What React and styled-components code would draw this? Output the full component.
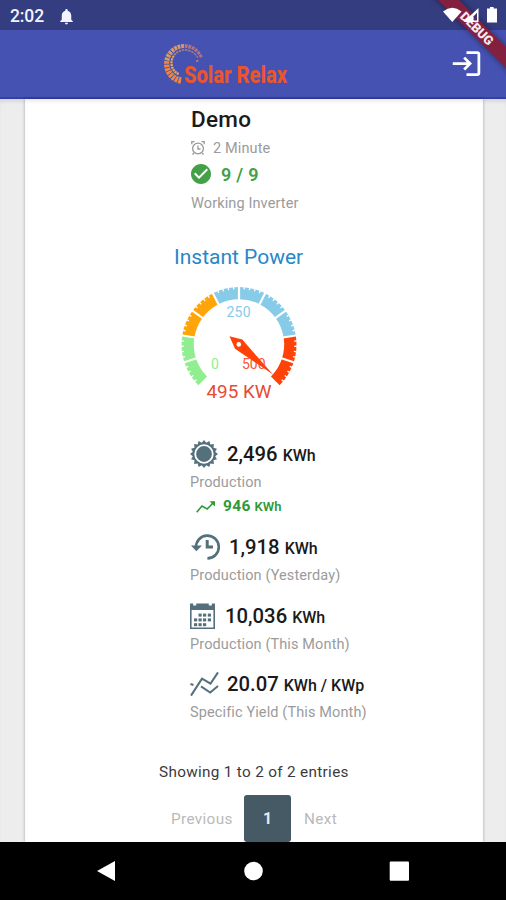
import React from 'react'
import styled, { createGlobalStyle } from 'styled-components'
import { MdLogin, MdNotifications, MdCheckCircle } from 'react-icons/md'

const GlobalStyle = createGlobalStyle`
  * {
    box-sizing: border-box;
  }

  body {
    margin: 0;
    background: #ededed;
    font-family: Roboto, 'Liberation Sans', sans-serif;
  }

  svg {
    display: block;
    flex-shrink: 0;
  }
`

const Screen = styled.div`
  position: relative;
  display: flex;
  flex-direction: column;
  width: 506px;
  height: 900px;
  overflow: hidden;
  background: #ededed;
`

const StatusBar = styled.div`
  display: flex;
  align-items: center;
  flex-shrink: 0;
  height: 30px;
  padding: 2px 8px 0 10px;
  background: #343d80;
  color: #f1f3ff;
`

const Clock = styled.span`
  width: 47px;
  font-size: 17.5px;
  font-weight: 500;
  letter-spacing: -0.1px;
`

const StatusIcons = styled.div`
  position: relative;
  z-index: 2;
  margin-left: auto;
`

const AppBar = styled.header`
  display: flex;
  align-items: center;
  justify-content: space-between;
  flex-shrink: 0;
  height: 69px;
  padding: 0 23px 0 160px;
  background: #4652b2;
  border-bottom: 2px solid #3440a4;
  color: #fff;
`

const DebugBanner = styled.div`
  position: absolute;
  z-index: 1;
  top: 21px;
  left: 407px;
  width: 140px;
  height: 15px;
  transform: rotate(45deg);
  background: #84203f;
  box-shadow: 0 0 6px rgba(0, 0, 0, 0.45);
  color: #f6e9ee;
  font-size: 12.8px;
  font-weight: 900;
  line-height: 15px;
  text-align: center;
`

const Page = styled.main`
  flex: 1;
  min-height: 0;
  padding: 0 23px 0 25px;
  background: #ededed;
  box-shadow: inset 0 4px 4px -2px rgba(0, 0, 0, 0.12);
`

const Card = styled.section`
  display: flex;
  flex-direction: column;
  height: 100%;
  padding-top: 6px;
  background: #fff;
  box-shadow: 0 0 3px rgba(0, 0, 0, 0.3), inset 0 4px 4px -2px rgba(0, 0, 0, 0.1);
`

const Station = styled.div`
  padding-left: 166px;
`

const Row = styled.div`
  display: flex;
  align-items: center;
  height: ${({ $height }) => $height}px;
  white-space: nowrap;
`

const StationName = styled.h1`
  margin: 0;
  font-size: 22.5px;
  font-weight: 500;
  letter-spacing: 0.3px;
  color: #1b1b1b;
`

const Caption = styled.span`
  margin-left: ${({ $indent }) => $indent || 0}px;
  font-size: 14.5px;
  letter-spacing: 0.12px;
  color: #9b9b9b;
`

const CheckIcon = styled(MdCheckCircle)`
  margin-left: -2px;
  color: #43a047;
`

const Working = styled.span`
  margin-left: 8px;
  font-size: 18px;
  font-weight: 600;
  letter-spacing: 0.3px;
  color: #43a047;
`

const GaugeTitle = styled.h2`
  margin: 18px 0 0 149px;
  font-size: 21px;
  font-weight: 400;
  line-height: 36px;
  color: #2787c9;
`

const GaugeBox = styled.div`
  height: 135px;
  padding-left: 140px;
`

const Metric = styled.div`
  margin-top: ${({ $top }) => $top}px;
  padding-left: 165px;
`

const IconSlot = styled.span`
  width: ${({ $width }) => $width}px;
  color: #54707d;
`

const Value = styled.span`
  font-size: 20.3px;
  font-weight: 500;
  color: #1a1a1a;
`

const Unit = styled.span`
  padding: 2px 0 0 5px;
  font-size: 16px;
  font-weight: 500;
  color: #1a1a1a;
`

const Delta = styled.span`
  margin-left: 7px;
  font-size: 15.5px;
  font-weight: 700;
  letter-spacing: 0.3px;
  color: #2f9a35;
`

const DeltaUnit = styled.small`
  margin-left: 4px;
  font-size: 13px;
  font-weight: 600;
  letter-spacing: 0;
`

const Entries = styled.p`
  margin: 38px 0 0 134px;
  font-size: 15.3px;
  line-height: 24px;
  letter-spacing: 0.32px;
  color: #3b3b3b;
`

const Pager = styled.nav`
  display: flex;
  align-items: center;
  height: 47px;
  margin-top: 11px;
  padding-left: 146px;
`

const PageLink = styled.span`
  width: ${({ $width }) => $width}px;
  font-size: 15.3px;
  letter-spacing: 0.35px;
  color: #b9b9b9;
`

const PageNumber = styled.span`
  width: 47px;
  height: 47px;
  margin-right: 13px;
  border-radius: 3px;
  background: #455a64;
  color: #e4eaed;
  font-size: 16px;
  font-weight: 700;
  line-height: 47px;
  text-align: center;
`

const NavBar = styled.footer`
  display: flex;
  flex-shrink: 0;
  height: 58px;
  background: #000;
`

const polar = (cx, cy, r, deg) => {
  const a = (deg * Math.PI) / 180
  return [cx + r * Math.cos(a), cy + r * Math.sin(a)]
}

const ring = (cx, cy, outer, inner, from, to) => {
  const [x1, y1] = polar(cx, cy, outer, from)
  const [x2, y2] = polar(cx, cy, outer, to)
  const [x3, y3] = polar(cx, cy, inner, to)
  const [x4, y4] = polar(cx, cy, inner, from)
  return `M${x1} ${y1}A${outer} ${outer} 0 0 1 ${x2} ${y2}L${x3} ${y3}A${inner} ${inner} 0 0 0 ${x4} ${y4}Z`
}

function Logo() {
  // the blocks get bigger and more orange towards the bottom of the swirl
  const blocks = Array.from({ length: 21 }, (_, i) => {
    const size = 1 - i / 21
    const deg = 100 + i * 11.5
    return (
      <path
        key={i}
        d={ring(24, 34, 20, 17.2 - 3.6 * size, deg, deg + 8.8)}
        fill={i < 8 ? '#f2873c' : i < 15 ? '#d69c62' : '#b4737f'}
      />
    )
  })
  const inner = Array.from({ length: 17 }, (_, i) => {
    const deg = 118 + i * 13
    const outer = 12.8 + i * 0.18
    return <path key={i} d={ring(24, 34, outer, outer - 2.6 + i * 0.09, deg, deg + 10)} fill={i < 8 ? '#eaa650' : '#a97f85'} />
  })
  return (
    <svg width="180" height="67" viewBox="0 0 180 67">
      {blocks}
      {inner}
      <rect x="36" y="30" width="2.4" height="2" fill="#b4737f" />
      <text
        x="24"
        y="52.5"
        fill="#e9562b"
        fontSize="24.5"
        fontWeight="800"
        textLength="103"
        lengthAdjust="spacingAndGlyphs"
      >
        Solar Relax
      </text>
    </svg>
  )
}

const SEGMENTS = [
  '#90ee90',
  '#90ee90',
  '#ffa50a',
  '#ffa50a',
  '#87cbe9',
  '#87cbe9',
  '#87cbe9',
  '#87cbe9',
  '#ff4208',
  '#ff4208'
]

function Gauge() {
  const cx = 74
  const cy = 69.5
  const ticks = []
  for (let i = 1; i < 50; i++) {
    const major = i % 5 === 0
    const deg = 135 + i * 5.4
    const [x1, y1] = polar(cx, cy, 59, deg)
    const [x2, y2] = polar(cx, cy, major ? 43 : 55.3, deg)
    ticks.push(<line key={i} x1={x1} y1={y1} x2={x2} y2={y2} stroke="#fff" strokeWidth={major ? 2.2 : 1.3} />)
  }
  return (
    <svg width="150" height="135" viewBox="0 0 150 135">
      {SEGMENTS.map((color, i) => (
        <path key={i} d={ring(cx, cy, 57.5, 45.2, 135 + i * 27, 162 + i * 27)} fill={color} />
      ))}
      {ticks}
      <g fontSize="14" textAnchor="middle">
        <text x="73.7" y="42" fill="#87cbe9" letterSpacing="0.3">
          250
        </text>
        <text x="50" y="94" fill="#90ee90">
          0
        </text>
        <text x="88.8" y="94" fill="#f4573a">
          500
        </text>
      </g>
      <path d="M64.5 61.2L77.3 64.6L108 99.5L70 73.7Z" fill="#ff4208" />
      <circle cx="73.8" cy="69.4" r="2.3" fill="#fff" />
      <text x="74" y="123" textAnchor="middle" fontSize="18.9" fill="#e84a33">
        495 KW
      </text>
    </svg>
  )
}

function AlarmIcon() {
  return (
    <svg width="14" height="16" viewBox="0 0 14 16" fill="none" stroke="#999" strokeWidth="1.3">
      <circle cx="7" cy="8.5" r="5.4" />
      <path d="M7 5.5V9H9.5M0.8 4.2V1.6H3.6M13.2 4.2V1.6H10.4M2.8 13L1.5 14.6M11.2 13L12.5 14.6" />
    </svg>
  )
}

function SunIcon() {
  const points = Array.from({ length: 32 }, (_, i) => polar(14, 14, i % 2 ? 11.4 : 14, i * 11.25).join(',')).join(' ')
  return (
    <svg width="28" height="28" viewBox="0 0 28 28">
      <polygon points={points} fill="currentColor" />
      <circle cx="14" cy="14" r="8.8" fill="currentColor" stroke="#fff" strokeWidth="1.8" />
    </svg>
  )
}

function HistoryIcon() {
  return (
    <svg width="32" height="28" viewBox="0 0 32 28" fill="none" stroke="currentColor">
      <path d="M6 14.5A11.4 11.4 0 1 1 17.4 25.4" strokeWidth="2.6" />
      <path d="M1 12.4H12L6.4 18.2Z" fill="currentColor" stroke="none" />
      <path d="M17.2 7V14H23" strokeWidth="3" />
    </svg>
  )
}

const CALENDAR_DOTS = [
  [8.5, 11.6],
  [13, 11.6],
  [17.8, 11.6],
  [4, 16.4],
  [8.5, 16.4],
  [13, 16.4],
  [17.8, 16.4],
  [4, 21.2],
  [8.5, 21.2],
  [13, 21.2]
]

function CalendarIcon() {
  return (
    <svg width="25" height="28" viewBox="0 0 25 28" fill="currentColor">
      <path d="M0 1.5H3.2V3.5H6.2V1.5H18.8V3.5H21.8V1.5H25V27H0ZM1.6 8V25.4H23.4V8Z" fillRule="evenodd" />
      {CALENDAR_DOTS.map(([x, y]) => (
        <rect key={`${x}-${y}`} x={x} y={y} width="3.2" height="3" />
      ))}
    </svg>
  )
}

function YieldIcon() {
  return (
    <svg width="29" height="26" viewBox="0 0 29 26" fill="none" stroke="currentColor" strokeWidth="2">
      <path d="M1 24.6L12 7.6L20.5 12.6L28 1.4M11 15.4L20.2 21.6L28 15M0.5 13L3.5 14" />
    </svg>
  )
}

function TrendIcon() {
  return (
    <svg width="20" height="13" viewBox="0 0 20 13" fill="none" stroke="#2f9a35" strokeWidth="1.6">
      <path d="M0.7 12.2L6 6L11.2 9L18 2" />
      <path d="M13.5 1.2H19V6.4Z" fill="#2f9a35" stroke="none" />
    </svg>
  )
}

const metrics = [
  { icon: <SunIcon />, slot: 37, value: '2,496', unit: 'KWh', label: 'Production', top: 26, delta: '946' },
  { icon: <HistoryIcon />, slot: 39, value: '1,918', unit: 'KWh', label: 'Production (Yesterday)', top: 9 },
  { icon: <CalendarIcon />, slot: 35, value: '10,036', unit: 'KWh', label: 'Production (This Month)', top: 13 },
  { icon: <YieldIcon />, slot: 37, value: '20.07', unit: 'KWh / KWp', label: 'Specific Yield (This Month)', top: 12 }
]

export default function App() {
  return (
    <Screen>
      <GlobalStyle />
      <StatusBar>
        <Clock>2:02</Clock>
        <MdNotifications size={19} />
        <StatusIcons>
          <svg width="55" height="20" viewBox="0 0 55 20" fill="#fff">
            <path d="M0 5.5Q9.3 -1.8 18.6 5.5L9.3 16Z" />
            <path d="M35.5 2V16H20.5Z" />
            <path d="M34 6.8V14.6H30.6V10.2Z" fill="#4b2f5e" />
            <path d="M47 1H50.6V2.6H54V16.4H44V2.6H47Z" />
          </svg>
        </StatusIcons>
      </StatusBar>
      <AppBar>
        <Logo />
        <MdLogin size={33} />
      </AppBar>

      <Page>
        <Card>
          <Station>
            <Row $height={28}>
              <StationName>Demo</StationName>
            </Row>
            <Row $height={30}>
              <AlarmIcon />
              <Caption $indent={8}>2 Minute</Caption>
            </Row>
            <Row $height={22}>
              <CheckIcon size={24} />
              <Working>9 / 9</Working>
            </Row>
            <Row $height={36}>
              <Caption>Working Inverter</Caption>
            </Row>
          </Station>

          <GaugeTitle>Instant Power</GaugeTitle>
          <GaugeBox>
            <Gauge />
          </GaugeBox>

          {metrics.map(({ icon, slot, value, unit, label, top, delta }) => (
            <Metric key={label} $top={top}>
              <Row $height={36}>
                <IconSlot $width={slot}>{icon}</IconSlot>
                <Value>{value}</Value>
                <Unit>{unit}</Unit>
              </Row>
              <Row $height={20}>
                <Caption>{label}</Caption>
              </Row>
              {delta && (
                <Row $height={28}>
                  <IconSlot $width={6} />
                  <TrendIcon />
                  <Delta>
                    {delta}
                    <DeltaUnit>KWh</DeltaUnit>
                  </Delta>
                </Row>
              )}
            </Metric>
          ))}

          <Entries>Showing 1 to 2 of 2 entries</Entries>
          <Pager>
            <PageLink $width={73}>Previous</PageLink>
            <PageNumber>1</PageNumber>
            <PageLink>Next</PageLink>
          </Pager>
        </Card>
      </Page>

      <NavBar>
        <svg width="506" height="58" viewBox="0 0 506 58" fill="#fff">
          <path d="M97 29L115 19V39Z" />
          <circle cx="253.5" cy="29" r="9.3" />
          <rect x="389.7" y="19.5" width="19.3" height="19.3" rx="1" />
        </svg>
      </NavBar>
      <DebugBanner>DEBUG</DebugBanner>
    </Screen>
  )
}
